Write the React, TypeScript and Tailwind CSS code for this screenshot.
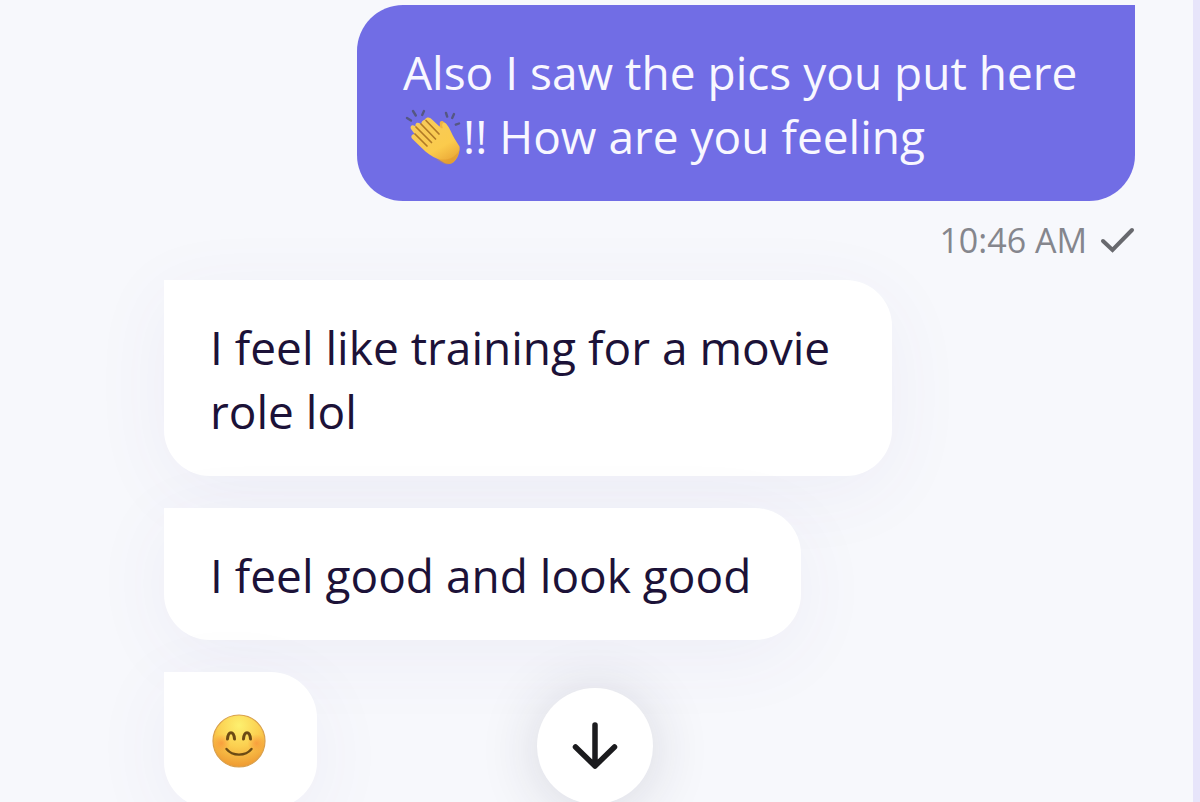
import type { ReactNode } from "react";

function ClapEmoji() {
  return (
    <svg role="img" aria-label="clapping hands" viewBox="0 0 56 60" className="mx-0.5 -mt-3 -mb-0.5 inline-block h-[60px] w-14 align-middle">
      <defs>
        <linearGradient id="skin" x1="0.2" y1="0" x2="0.8" y2="1">
          <stop offset="0" stopColor="#f7cb5c" />
          <stop offset="0.65" stopColor="#fbcb4c" />
          <stop offset="1" stopColor="#e9a535" />
        </linearGradient>
      </defs>
      <g stroke="#555783" strokeWidth="2.4" strokeLinecap="round">
        <path d="M2 11l4 2.500M8 4l2.800 4.500M19 4l-1.800 4M41 6l1.200 3.600M49 7l-1.800 4M54 16.500l-3.200 1.200" />
      </g>
      <path d="M35 18c-1.500-4 2.500-5.500 4.500-2.500l4.500 8c2 3.500 3.500 7 6 11l3 8-9 8-17-12z" fill="#eeb344" />
      <path
        d="M20 12.500c2-3 5-2 7 0l9 8.500c1 .8 2 .3 1.600-.8-1.600-4 1.400-6 4-3 3.500 4 5 9.500 8 14.500l5 8c.8 7-4.300 17-10.300 17.300-5 0-7-3-11.500-5-6-2.500-11-6-15.500-10.500L7.500 32c-2.500-2.500-.5-5.500 2.300-4.700l-3.600-5c-2-3.300 1.300-5.300 3.600-3.300l1.200 1c-1.700-3.200 1-5.500 4-3.500l1.200 1c-.2-2.500 1.600-4.500 3.800-5z"
        fill="url(#skin)"
      />
      <path
        d="M10 27l12 12M11 20l15.500 15.500M16 17l14.500 15M21 13.500L34 27"
        fill="none"
        stroke="#b17a26"
        strokeWidth="1.700"
        strokeLinecap="round"
      />
      <path d="M31 53c4 .5 7 4.500 11 4.500 5.500 0 11-7 12.500-14.500-3 5-7 8-11 9-5 1.200-8 0-12.500 1z" fill="#dc9128" opacity="0.4" />
    </svg>
  );
}

function SmileEmoji() {
  return (
    <svg role="img" aria-label="smiling face" viewBox="0 0 56 56" className="block size-14">
      <defs>
        <radialGradient id="face" cx="0.5" cy="0.2" r="0.82">
          <stop offset="0" stopColor="#fdf06f" />
          <stop offset="0.5" stopColor="#fbcf50" />
          <stop offset="1" stopColor="#ee962f" />
        </radialGradient>
        <radialGradient id="cheek">
          <stop offset="0" stopColor="#f98a36" stopOpacity="0.65" />
          <stop offset="1" stopColor="#f98a36" stopOpacity="0" />
        </radialGradient>
      </defs>
      <circle cx="28" cy="28" r="26" fill="url(#face)" stroke="#d9a04c" strokeWidth="1.200" />
      <circle cx="10.500" cy="30" r="9" fill="url(#cheek)" />
      <circle cx="45.500" cy="30" r="9" fill="url(#cheek)" />
      <g fill="none" stroke="#6b4a14" strokeLinecap="round">
        <path d="M16.500 26c.7-8.500 6.300-8.500 7 0M32.500 26c.7-8.500 6.300-8.500 7 0" strokeWidth="3" />
        <path d="M15.500 36c6 7.500 19 7.500 25 0" strokeWidth="2.400" />
      </g>
    </svg>
  );
}

function Received({ children }: { children: ReactNode }) {
  return (
    <div className="w-fit max-w-[728px] rounded-[46px] rounded-tl-none bg-white pt-[35px] pr-[50px] pb-[33px] pl-[46px] text-[#1c1238] shadow-[0_16px_80px_rgba(80,75,160,0.06)]">
      {children}
    </div>
  );
}

export default function App() {
  return (
    <div className="h-screen overflow-hidden border-r-[7px] border-[#e7e5fa] bg-[#f7f8fc] font-['Open_Sans','Noto_Sans',sans-serif] text-[46px] leading-[64px]">
      <main className="relative h-full overflow-hidden pt-[5px] pr-[58px] pl-[164px]">
        <section className="flex flex-col items-end">
          <p className="max-w-[778px] rounded-[46px] rounded-tr-none bg-[#716de5] pt-[35px] pr-[50px] pb-[33px] pl-[46px] text-[#f8f7ff]">
            Also I saw the pics you put here <ClapEmoji />
            !! How are you feeling
          </p>
          <div className="mt-[15px] flex items-center gap-3 text-[34px] leading-[48px] text-[#85868d]">
            <time>10:46 AM</time>
            <svg role="img" aria-label="Sent" viewBox="0 0 36 28" className="h-7 w-9">
              <path d="M4 15l9.500 9L33 4" fill="none" stroke="#68696e" strokeWidth="4" strokeLinecap="round" strokeLinejoin="miter" />
            </svg>
          </div>
        </section>
        <section className="mt-4 flex flex-col gap-8">
          <Received><p>I feel like training for a movie role lol</p></Received>
          <Received><p>I feel good and look good</p></Received>
          <Received><div className="flex h-[68px] w-[57px] items-center justify-center"><SmileEmoji /></div></Received>
        </section>
        <button
          type="button"
          aria-label="Scroll to latest message"
          className="absolute -bottom-0.5 left-[45%] flex size-[116px] items-center justify-center rounded-full bg-white shadow-[0_4px_60px_rgba(35,35,60,0.16)]"
        >
          <svg viewBox="0 0 48 48" className="size-12" fill="none" stroke="#1b1b1e" strokeWidth="5.500" strokeLinecap="round" strokeLinejoin="round">
            <path d="M24 3v41M4.500 25L24 44l19.500-19" />
          </svg>
        </button>
      </main>
    </div>
  );
}
